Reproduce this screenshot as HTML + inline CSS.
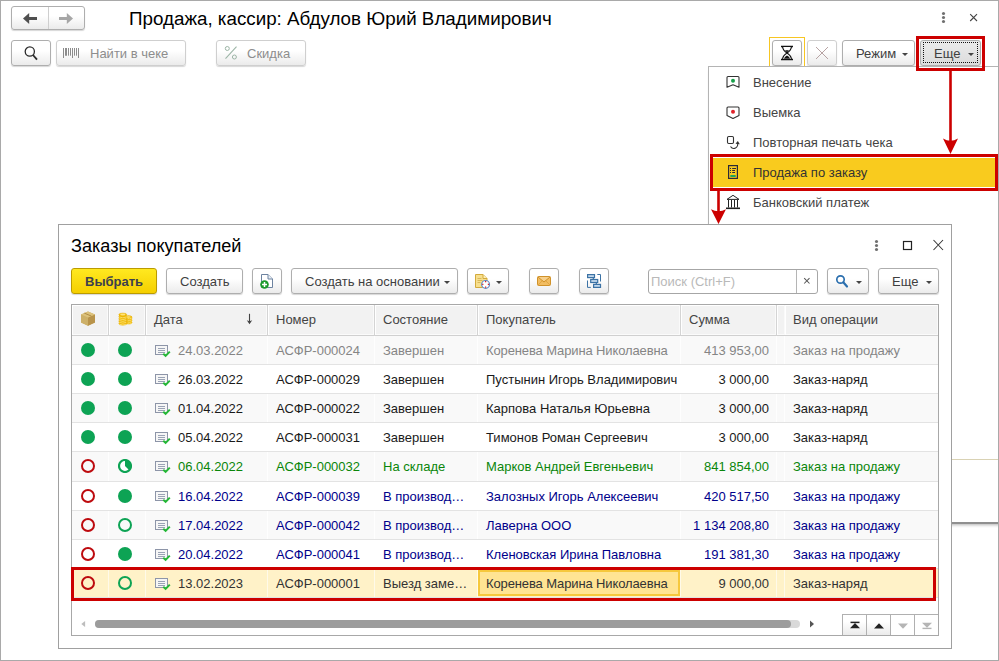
<!DOCTYPE html>
<html lang="ru">
<head>
<meta charset="utf-8">
<title>Продажа</title>
<style>
*{box-sizing:border-box;margin:0;padding:0}
html,body{width:999px;height:661px;overflow:hidden;background:#fff}
body{position:relative;font-family:"Liberation Sans",sans-serif;font-size:13px;color:#333}
.abs{position:absolute}
#frame{position:absolute;left:0;top:0;width:999px;height:661px;border:1px solid #a9a9a9;pointer-events:none;z-index:50}
.btn{position:absolute;height:26px;border:1px solid #aeaeae;border-radius:3px;background:linear-gradient(#ffffff 0%,#ffffff 40%,#ebebeb 100%);box-shadow:0 1px 1px rgba(0,0,0,.16);font-size:13px;line-height:26px;color:#3f3f3f;white-space:nowrap}
.btn.dis{color:#8d8d8d;border-color:#cfcfcf}
.btn span.t{position:absolute;top:0}
.caret{position:absolute;width:0;height:0;border-left:3px solid transparent;border-right:3px solid transparent;border-top:3px solid #444}
#title{left:129px;top:8px;font-size:18.800px;line-height:22px;color:#000;white-space:nowrap}
/* popup */
#popup{left:708px;top:66px;width:300px;height:458px;background:#fff;border:1px solid #b4b4b4;border-bottom:2px solid #8f8f8f;box-shadow:0 3px 3px -2px rgba(0,0,0,.3)}
.mi{position:absolute;left:44px;font-size:13px;line-height:16px;color:#444;white-space:nowrap}
/* dialog */
#dlg{left:58px;top:224px;width:894px;height:425px;background:#fff;border:1px solid #a0a0a0;}
#dtitle{left:71px;top:235px;font-size:18.130px;line-height:22px;color:#000;white-space:nowrap}
#tbl{left:71px;top:304px;width:868px;height:332px;border:1px solid #a8a8a8;background:#fff;overflow:hidden}
.hd{position:absolute;top:0;height:31px;background:#f2f2f2;border-right:1px solid #d4d4d4;border-bottom:1px solid #d0d0d0;box-shadow:inset 1px 0 0 #fff, inset -1px 0 0 #fafafa, inset 0 1px 0 #fff, inset 0 -1px 0 #fbfbfb;font-size:13px;line-height:29px;color:#444;white-space:nowrap;overflow:hidden}
.row{position:absolute;left:0;width:866px;height:29.125px;border-bottom:1px solid #e3e3e3;font-size:13px;white-space:nowrap}
.row.alt{background:#f9f9f9}
.row .c{position:absolute;top:0;height:100%;line-height:30px;overflow:hidden;border-right:1px solid rgba(255,255,255,.75)}
.gry{color:#858585}.blk{color:#1a1a1a}.grn{color:#0a860a}.nav{color:#00008b}
.sel{background:#fff2c8!important;color:#333}
.sel .c{border-right-color:rgba(255,255,255,.6)}
.dot{position:absolute;width:14px;height:14px;border-radius:50%}
.dot.f{background:#0da354}
.dot.ro{border:2px solid #bd0a0e}
.dot.go{border:2px solid #0da354}
.red{position:absolute;border:3px solid #cc0000}
</style>
</head>
<body>
<!-- main window header -->
<div class="btn abs" style="left:11px;top:6px;width:74px;height:24px;"></div>
<div class="abs" style="left:48px;top:7px;width:1px;height:22px;background:#cfcfcf"></div>
<svg class="abs" style="left:11px;top:6px" width="74" height="24" viewBox="0 0 74 24">
<path d="M12 12.500L18.200 7V18Z" fill="#4f4f4f"/><path d="M18 12.500h8" stroke="#4f4f4f" stroke-width="3"/>
<path d="M62 12.500L55.800 7V18Z" fill="#a6a6a6"/><path d="M48 12.500h8" stroke="#a6a6a6" stroke-width="3"/>
</svg>
<div id="title" class="abs">Продажа, кассир: Абдулов Юрий Владимирович</div>
<!-- dots & close -->
<svg class="abs" style="left:935px;top:8px" width="50" height="20" viewBox="0 0 50 20">
<circle cx="8.500" cy="5.500" r="1.550" fill="#707070"/><circle cx="8.500" cy="9.500" r="1.550" fill="#707070"/><circle cx="8.500" cy="13.500" r="1.550" fill="#707070"/>
<path d="M35.200 6.200l6.800 6.800M42 6.200l-6.800 6.800" stroke="#444" stroke-width="1.100"/>
</svg>

<!-- toolbar row -->
<div class="btn" style="left:11px;top:40px;width:40px"></div>
<svg class="abs" style="left:22px;top:44px" width="18" height="18" viewBox="0 0 18 18"><circle cx="7.800" cy="7.500" r="4.600" fill="none" stroke="#2b2b2b" stroke-width="1.300"/><path d="M11 11l4 4.700" stroke="#2b2b2b" stroke-width="1.800"/></svg>
<div class="btn dis" style="left:56px;top:40px;width:130px"><span class="t" style="left:33px">Найти в чеке</span></div>
<svg class="abs" style="left:62px;top:48px" width="18" height="12" viewBox="0 0 18 12"><path d="M1.500 0v10M6.500 0v7.700M8.500 0v7.700M10.500 0v10M12.500 0v7.700M14.500 0v7.700M16.500 0v10" stroke="#8c8c8c" stroke-width="1"/><path d="M4 0v7.700" stroke="#8c8c8c" stroke-width="2"/></svg>
<div class="btn dis" style="left:216px;top:40px;width:90px"><span class="t" style="left:30px">Скидка</span></div>
<svg class="abs" style="left:223px;top:45px" width="16" height="16" viewBox="0 0 16 16"><circle cx="4.300" cy="3.500" r="2" fill="none" stroke="#9cb5a6" stroke-width="1"/><circle cx="11.400" cy="12" r="2" fill="none" stroke="#9cb5a6" stroke-width="1"/><path d="M13.500 1.700L2.500 13.700" stroke="#9cb5a6" stroke-width="1.100"/></svg>

<div class="abs" style="left:769px;top:37px;width:36px;height:32px;border:1.500px solid #f7c623;background:#fff"></div>
<div class="btn" style="left:772px;top:40px;width:30px"></div>
<div class="btn dis" style="left:807px;top:40px;width:30px"></div>
<div class="btn" style="left:842px;top:40px;width:73px"><span class="t" style="left:13px">Режим</span><i class="caret" style="left:59px;top:12px"></i></div>
<div class="btn" style="left:920px;top:40px;width:61px;background:linear-gradient(#ebebeb,#dcdcdc)"><span class="t" style="left:13px">Еще</span><i class="caret" style="left:47px;top:12px"></i></div>
<div class="abs" style="left:923px;top:42px;width:55px;height:21px;border:1px dotted #111"></div>

<svg class="abs" style="left:780px;top:45px" width="14" height="16" viewBox="0 0 14 16">
 <path d="M1 1.500h12M1 14.500h12" stroke="#111" stroke-width="1.400"/>
 <path d="M2.600 2Q3 5.500 7 8Q11 5.500 11.400 2M2.600 14Q3 10.500 7 8Q11 10.500 11.400 14" fill="#fff" stroke="#111" stroke-width="1.200"/>
 <path d="M5 5.300h4L7 7.600Z" fill="#111"/><path d="M3.800 13.800Q5 11.500 7 10.600Q9 11.500 10.200 13.800Z" fill="#111"/>
</svg>
<svg class="abs" style="left:815px;top:46px" width="14" height="14" viewBox="0 0 14 14"><path d="M1 1l12 12M13 1L1 13" stroke="#b7a3a3" stroke-width="1"/></svg>
<!-- popup -->
<div id="popup" class="abs">
 <div class="mi" style="top:8px">Внесение</div>
 <div class="mi" style="top:38px">Выемка</div>
 <div class="mi" style="top:68px">Повторная печать чека</div>
 <div class="abs" style="left:1px;top:91px;width:290px;height:29px;background:#f9cb1e"></div>
<svg class="abs" style="left:15px;top:7px" width="18" height="140" viewBox="0 0 18 140">
 <!-- vnesenie -->
 <path d="M3 3.500Q3 2.500 4 2.500H14Q15 2.500 15 3.500V13.300L9 10.800L3 13.300Z" fill="#fff" stroke="#333" stroke-width="1.100" stroke-linejoin="round"/>
 <circle cx="9" cy="6.800" r="2" fill="#17a04a"/>
 <!-- vyemka -->
 <path d="M3 34Q3 33 4 33H14Q15 33 15 34V41.500L9 44.500L3 41.500Z" fill="#fff" stroke="#333" stroke-width="1.100" stroke-linejoin="round"/>
 <circle cx="9" cy="37.800" r="2" fill="#e0222a"/>
 <!-- reprint -->
 <rect x="3.500" y="62.500" width="6" height="7" rx="1.200" fill="#fff" stroke="#333" stroke-width="1.100"/>
 <path d="M6.500 72.500Q8.500 75.500 11.500 74Q14.500 72 13.500 69" fill="none" stroke="#333" stroke-width="1.100"/>
 <path d="M11.500 69.800L13.800 67L15.800 70.300Z" fill="#333"/>
 <!-- sale by order -->
 <rect x="4.600" y="91.600" width="8.800" height="12.800" fill="none" stroke="#2b2b38" stroke-width="1.200"/>
 <path d="M6 94.500h1M8.200 94.500h3.800M6 96.500h1M8.200 96.500h2.800M6 98.500h1M8.200 98.500h2.800" stroke="#2b2b38" stroke-width="1"/>
 <path d="M6.300 102h5.400" stroke="#1fa55a" stroke-width="2"/>
 <!-- bank -->
 <path d="M9 121.300L15 125.400H3Z" fill="#fff" stroke="#222" stroke-width="1" stroke-linejoin="miter"/>
 <path d="M4.500 126v7.500M7.500 126v7.500M10.500 126v7.500M13.500 126v7.500" stroke="#222" stroke-width="1"/>
 <path d="M2 134.300h14" stroke="#222" stroke-width="1.600"/>
</svg>
 <div class="mi" style="top:98px;color:#333">Продажа по заказу</div>
 <div class="mi" style="top:128px">Банковский платеж</div>
 <div class="abs" style="left:243px;top:392px;width:56px;height:1px;background:#d9d2b4"></div>
</div>

<!-- dialog -->
<div id="dlg" class="abs"></div>
<div id="dtitle" class="abs">Заказы покупателей</div>


<!-- dialog toolbar -->
<div class="btn" style="left:71px;top:268px;width:86px;background:linear-gradient(#ffe920,#f5cf00);border-color:#bb9b00;color:#3c3f4e;font-weight:bold"><span class="t" style="left:13px">Выбрать</span></div>
<div class="btn" style="left:166px;top:268px;width:77px"><span class="t" style="left:13px">Создать</span></div>
<div class="btn" style="left:252px;top:268px;width:30px"></div>
<svg class="abs" style="left:258px;top:272px" width="18" height="18" viewBox="0 0 18 18">
 <path d="M3.500 2.500H10L14.500 7V15.500H3.500Z" fill="#fff" stroke="#6d83a0" stroke-width="1"/>
 <path d="M10 2.500V7H14.500" fill="#e8eef6" stroke="#6d83a0" stroke-width="1"/>
 <circle cx="6.500" cy="12.500" r="4.300" fill="#1c9a2c"/>
 <path d="M6.500 10v5M4 12.500h5" stroke="#fff" stroke-width="1.500"/>
</svg>
<div class="btn" style="left:291px;top:268px;width:167px"><span class="t" style="left:13px">Создать на основании</span><i class="caret" style="left:152px;top:12px"></i></div>
<div class="btn" style="left:467px;top:268px;width:42px"><i class="caret" style="left:28px;top:12px"></i></div>
<svg class="abs" style="left:473px;top:272px" width="20" height="18" viewBox="0 0 20 18">
 <path d="M2.500 2.500H10L14 6.500V15.500H2.500Z" fill="#f7df8e" stroke="#d3aa3c" stroke-width="1"/>
 <path d="M10 2.500V6.500H14" fill="#fdf0bd" stroke="#d3aa3c" stroke-width="1"/>
 <path d="M4.500 6.500h4M4.500 8.500h5M4.500 10.500h3" stroke="#d9b85a" stroke-width="1"/>
 <circle cx="12.600" cy="12.400" r="3.900" fill="#fff" stroke="#5a86c5" stroke-width="1.200"/>
 <path d="M12.600 9v1.200M12.600 14.600v1.200M9.200 12.400h1.200M14.800 12.400h1.200" stroke="#e02020" stroke-width="1.200"/>
</svg>
<div class="btn" style="left:529px;top:268px;width:30px"></div>
<svg class="abs" style="left:536px;top:275px" width="16" height="12" viewBox="0 0 16 12">
 <rect x="1.500" y="1.500" width="13" height="9" rx="1" fill="#f2bd62" stroke="#d0922a" stroke-width="1"/>
 <path d="M2 2L8 7L14 2" fill="#f7d08c" stroke="#cc8a1c" stroke-width=".9"/>
 <path d="M2 10L6.300 5.800M14 10L9.700 5.800" stroke="#dc9f3a" stroke-width=".8" fill="none"/>
</svg>
<div class="btn" style="left:579px;top:268px;width:30px"></div>
<svg class="abs" style="left:586px;top:273px" width="16" height="16" viewBox="0 0 16 16">
 <path d="M11.300 1.500H14.500V8.500M1.500 7.500V14.400H4.800" fill="none" stroke="#3b72a5" stroke-width="1"/>
 <path d="M7.300 4.500V6.500M10.300 9.500V11.500" stroke="#3b72a5" stroke-width="1.200"/>
 <rect x="1.600" y="1.600" width="6.900" height="3" fill="#c3d8ec" stroke="#3b72a5" stroke-width="1.200"/>
 <rect x="4.700" y="6.500" width="7" height="3" fill="#c3d8ec" stroke="#3b72a5" stroke-width="1.200"/>
 <rect x="7.600" y="11.400" width="6.900" height="3" fill="#c3d8ec" stroke="#3b72a5" stroke-width="1.200"/>
</svg>
<div class="abs" style="left:648px;top:269px;width:170px;height:25px;border:1px solid #a6a6a6;border-radius:3px;background:#fff"></div>
<div class="abs" style="left:796px;top:270px;width:1px;height:23px;background:#b5b5b5"></div>
<div class="abs" style="left:651px;top:269px;font-size:13px;line-height:26px;color:#b9b9b9;white-space:nowrap">Поиск (Ctrl+F)</div>
<svg class="abs" style="left:802px;top:276px" width="10" height="10" viewBox="0 0 10 10"><path d="M2.200 2.200l5.300 5.300M7.500 2.200l-5.300 5.300" stroke="#555" stroke-width="1.050"/></svg>
<div class="btn" style="left:827px;top:268px;width:42px"><i class="caret" style="left:28px;top:12px"></i></div>
<svg class="abs" style="left:834px;top:273px" width="16" height="16" viewBox="0 0 16 16"><circle cx="6.500" cy="6.500" r="3.700" fill="none" stroke="#2b6fae" stroke-width="1.700"/><path d="M9.300 9.300l3.700 4.200" stroke="#2b6fae" stroke-width="2.200" stroke-linecap="round"/></svg>
<div class="btn" style="left:878px;top:268px;width:61px"><span class="t" style="left:13px">Еще</span><i class="caret" style="left:47px;top:12px"></i></div>
<!-- dialog window controls -->
<svg class="abs" style="left:870px;top:236px" width="80" height="18" viewBox="0 0 80 18">
 <circle cx="6.500" cy="5.500" r="1.550" fill="#707070"/><circle cx="6.500" cy="9.500" r="1.550" fill="#707070"/><circle cx="6.500" cy="13.500" r="1.550" fill="#707070"/>
 <rect x="33.500" y="5.500" width="8" height="8" fill="none" stroke="#222" stroke-width="1.200"/>
 <path d="M63.500 4l9.500 10M73 4l-9.500 10" stroke="#333" stroke-width="1.050"/>
</svg>
<div id="tbl" class="abs">
<!--TBL-->
<div class="hd" style="left:0px;width:37px;padding-left:8px"></div>
<div class="hd" style="left:37px;width:37px;padding-left:8px"></div>
<div class="hd" style="left:74px;width:122px;padding-left:8px">Дата<svg style="position:absolute;left:99px;top:8px" width="9" height="12" viewBox="0 0 9 12"><path d="M4.500 0.800V9" stroke="#444" stroke-width="1.100"/><path d="M1.800 7.300L4.500 8.300L7.200 7.300L4.500 11.200Z" fill="#444"/></svg></div>
<div class="hd" style="left:196px;width:107px;padding-left:8px">Номер</div>
<div class="hd" style="left:303px;width:103px;padding-left:8px">Состояние</div>
<div class="hd" style="left:406px;width:203px;padding-left:8px">Покупатель</div>
<div class="hd" style="left:609px;width:96px;padding-left:8px">Сумма</div>
<div class="hd" style="left:705px;width:8px;padding-left:8px"></div>
<div class="hd" style="left:713px;width:154px;padding-left:8px">Вид операции</div>
<svg class="abs" style="left:7px;top:5px" width="18" height="17" viewBox="0 0 18 17"><path d="M2 4.500L9 1.500L16 4.500V12.500L9 15.800L2 12.500Z" fill="#c9a95c"/>
 <path d="M2 4.500L9 7.600V15.800L2 12.500Z" fill="#cdb068"/>
 <path d="M9 7.600L16 4.500V12.500L9 15.800Z" fill="#b8934a"/>
 <path d="M2 4.500L9 1.500L16 4.500L9 7.600Z" fill="#dcc27c"/>
 <path d="M5.300 3.100L12.400 6.100" stroke="#b08c44" stroke-width="1"/></svg>
<svg class="abs" style="left:44px;top:6px" width="18" height="17" viewBox="0 0 18 17"><g fill="#f2bd0a" stroke="#dfa300" stroke-width=".4">
 <ellipse cx="12.500" cy="11.500" rx="3.600" ry="1.600"/><ellipse cx="12.500" cy="9.700" rx="3.600" ry="1.600"/><ellipse cx="12.500" cy="7.900" rx="3.600" ry="1.600"/><ellipse cx="12.500" cy="6.200" rx="3.600" ry="1.600"/>
 <ellipse cx="6.800" cy="12.600" rx="4" ry="1.700"/><ellipse cx="6.800" cy="10.800" rx="4" ry="1.700"/><ellipse cx="6.800" cy="9" rx="4" ry="1.700"/><ellipse cx="6.800" cy="7.200" rx="4" ry="1.700"/><ellipse cx="6.800" cy="5.400" rx="4" ry="1.700"/><ellipse cx="6.800" cy="3.700" rx="4" ry="1.700"/>
 </g>
 <g fill="none" stroke="#ffe98a" stroke-width=".7">
 <path d="M3.300 6q3.500 1.600 7 0M3.300 7.800q3.500 1.600 7 0M3.300 9.600q3.500 1.600 7 0M3.300 11.400q3.500 1.600 7 0M3.300 13.200q3.500 1.600 7 0M11.500 7.400q2.300 .9 4.300 -.3M11.500 9.200q2.300 .9 4.300 -.3M11.500 11q2.300 .9 4.300 -.3M11.500 12.700q2.300 .9 4.300 -.3"/>
 </g>
 <ellipse cx="6.800" cy="3.500" rx="2.600" ry=".9" fill="#ffe27a"/>
 <ellipse cx="12.500" cy="6" rx="2.300" ry=".8" fill="#ffe27a"/></svg>
<div class="row gry alt" style="top:31px;height:29px"><div class="c" style="left:0px;width:37px;"><i class="dot f" style="left:9px;top:7px"></i></div><div class="c" style="left:37px;width:37px;"><i class="dot f" style="left:9px;top:7px"></i></div><div class="c" style="left:74px;width:122px;"><svg class="abs" style="left:9px;top:8px" width="16" height="15" viewBox="0 0 16 15"><rect x=".5" y="1.500" width="12" height="9" fill="#f6f6f6" stroke="#8d95a8" stroke-width="1"/>
 <path d="M3 4.500h7M3 6.500h7M3 8.500h7" stroke="#9aa3b5" stroke-width="1"/>
 <path d="M8.300 9.800l2.300 2.100L14.800 7.600" stroke="#24b836" stroke-width="2" fill="none"/></svg><span style="position:absolute;left:32px">24.03.2022</span></div><div class="c" style="left:196px;width:107px;padding-left:8px;">АСФР-000024</div><div class="c" style="left:303px;width:103px;padding-left:8px;">Завершен</div><div class="c" style="left:406px;width:203px;padding-left:8px;letter-spacing:-.120px;">Коренева Марина Николаевна</div><div class="c" style="left:609px;width:96px;padding-right:7px;text-align:right;">413 953,00</div><div class="c" style="left:705px;width:8px;"></div><div class="c" style="left:713px;width:154px;padding-left:8px;">Заказ на продажу</div></div>
<div class="row blk" style="top:60px;height:29px"><div class="c" style="left:0px;width:37px;"><i class="dot f" style="left:9px;top:7px"></i></div><div class="c" style="left:37px;width:37px;"><i class="dot f" style="left:9px;top:7px"></i></div><div class="c" style="left:74px;width:122px;"><svg class="abs" style="left:9px;top:8px" width="16" height="15" viewBox="0 0 16 15"><rect x=".5" y="1.500" width="12" height="9" fill="#f6f6f6" stroke="#8d95a8" stroke-width="1"/>
 <path d="M3 4.500h7M3 6.500h7M3 8.500h7" stroke="#9aa3b5" stroke-width="1"/>
 <path d="M8.300 9.800l2.300 2.100L14.800 7.600" stroke="#24b836" stroke-width="2" fill="none"/></svg><span style="position:absolute;left:32px">26.03.2022</span></div><div class="c" style="left:196px;width:107px;padding-left:8px;">АСФР-000029</div><div class="c" style="left:303px;width:103px;padding-left:8px;">Завершен</div><div class="c" style="left:406px;width:203px;padding-left:8px;">Пустынин Игорь Владимирович</div><div class="c" style="left:609px;width:96px;padding-right:7px;text-align:right;">3 000,00</div><div class="c" style="left:705px;width:8px;"></div><div class="c" style="left:713px;width:154px;padding-left:8px;">Заказ-наряд</div></div>
<div class="row blk alt" style="top:89px;height:29px"><div class="c" style="left:0px;width:37px;"><i class="dot f" style="left:9px;top:7px"></i></div><div class="c" style="left:37px;width:37px;"><i class="dot f" style="left:9px;top:7px"></i></div><div class="c" style="left:74px;width:122px;"><svg class="abs" style="left:9px;top:8px" width="16" height="15" viewBox="0 0 16 15"><rect x=".5" y="1.500" width="12" height="9" fill="#f6f6f6" stroke="#8d95a8" stroke-width="1"/>
 <path d="M3 4.500h7M3 6.500h7M3 8.500h7" stroke="#9aa3b5" stroke-width="1"/>
 <path d="M8.300 9.800l2.300 2.100L14.800 7.600" stroke="#24b836" stroke-width="2" fill="none"/></svg><span style="position:absolute;left:32px">01.04.2022</span></div><div class="c" style="left:196px;width:107px;padding-left:8px;">АСФР-000022</div><div class="c" style="left:303px;width:103px;padding-left:8px;">Завершен</div><div class="c" style="left:406px;width:203px;padding-left:8px;">Карпова Наталья Юрьевна</div><div class="c" style="left:609px;width:96px;padding-right:7px;text-align:right;">3 000,00</div><div class="c" style="left:705px;width:8px;"></div><div class="c" style="left:713px;width:154px;padding-left:8px;">Заказ-наряд</div></div>
<div class="row blk" style="top:118px;height:29px"><div class="c" style="left:0px;width:37px;"><i class="dot f" style="left:9px;top:7px"></i></div><div class="c" style="left:37px;width:37px;"><i class="dot f" style="left:9px;top:7px"></i></div><div class="c" style="left:74px;width:122px;"><svg class="abs" style="left:9px;top:8px" width="16" height="15" viewBox="0 0 16 15"><rect x=".5" y="1.500" width="12" height="9" fill="#f6f6f6" stroke="#8d95a8" stroke-width="1"/>
 <path d="M3 4.500h7M3 6.500h7M3 8.500h7" stroke="#9aa3b5" stroke-width="1"/>
 <path d="M8.300 9.800l2.300 2.100L14.800 7.600" stroke="#24b836" stroke-width="2" fill="none"/></svg><span style="position:absolute;left:32px">05.04.2022</span></div><div class="c" style="left:196px;width:107px;padding-left:8px;">АСФР-000031</div><div class="c" style="left:303px;width:103px;padding-left:8px;">Завершен</div><div class="c" style="left:406px;width:203px;padding-left:8px;">Тимонов Роман Сергеевич</div><div class="c" style="left:609px;width:96px;padding-right:7px;text-align:right;">3 000,00</div><div class="c" style="left:705px;width:8px;"></div><div class="c" style="left:713px;width:154px;padding-left:8px;">Заказ-наряд</div></div>
<div class="row grn alt" style="top:147px;height:30px"><div class="c" style="left:0px;width:37px;"><i class="dot ro" style="left:9px;top:7px"></i></div><div class="c" style="left:37px;width:37px;"><svg class="abs" style="left:9px;top:7px" width="14" height="14" viewBox="0 0 14 14"><circle cx="7" cy="7" r="6" fill="#fff" stroke="#0da354" stroke-width="2.200"/><path d="M7 7V1A6 6 0 0 1 11.240 11.240Z" fill="#0da354"/></svg></div><div class="c" style="left:74px;width:122px;"><svg class="abs" style="left:9px;top:8px" width="16" height="15" viewBox="0 0 16 15"><rect x=".5" y="1.500" width="12" height="9" fill="#f6f6f6" stroke="#8d95a8" stroke-width="1"/>
 <path d="M3 4.500h7M3 6.500h7M3 8.500h7" stroke="#9aa3b5" stroke-width="1"/>
 <path d="M8.300 9.800l2.300 2.100L14.800 7.600" stroke="#24b836" stroke-width="2" fill="none"/></svg><span style="position:absolute;left:32px">06.04.2022</span></div><div class="c" style="left:196px;width:107px;padding-left:8px;">АСФР-000032</div><div class="c" style="left:303px;width:103px;padding-left:8px;">На складе</div><div class="c" style="left:406px;width:203px;padding-left:8px;">Марков Андрей Евгеньевич</div><div class="c" style="left:609px;width:96px;padding-right:7px;text-align:right;">841 854,00</div><div class="c" style="left:705px;width:8px;"></div><div class="c" style="left:713px;width:154px;padding-left:8px;">Заказ на продажу</div></div>
<div class="row nav" style="top:177px;height:29px"><div class="c" style="left:0px;width:37px;"><i class="dot ro" style="left:9px;top:7px"></i></div><div class="c" style="left:37px;width:37px;"><i class="dot f" style="left:9px;top:7px"></i></div><div class="c" style="left:74px;width:122px;"><svg class="abs" style="left:9px;top:8px" width="16" height="15" viewBox="0 0 16 15"><rect x=".5" y="1.500" width="12" height="9" fill="#f6f6f6" stroke="#8d95a8" stroke-width="1"/>
 <path d="M3 4.500h7M3 6.500h7M3 8.500h7" stroke="#9aa3b5" stroke-width="1"/>
 <path d="M8.300 9.800l2.300 2.100L14.800 7.600" stroke="#24b836" stroke-width="2" fill="none"/></svg><span style="position:absolute;left:32px">16.04.2022</span></div><div class="c" style="left:196px;width:107px;padding-left:8px;">АСФР-000039</div><div class="c" style="left:303px;width:103px;padding-left:8px;">В производ…</div><div class="c" style="left:406px;width:203px;padding-left:8px;">Залозных Игорь Алексеевич</div><div class="c" style="left:609px;width:96px;padding-right:7px;text-align:right;">420 517,50</div><div class="c" style="left:705px;width:8px;"></div><div class="c" style="left:713px;width:154px;padding-left:8px;">Заказ на продажу</div></div>
<div class="row nav alt" style="top:206px;height:29px"><div class="c" style="left:0px;width:37px;"><i class="dot ro" style="left:9px;top:7px"></i></div><div class="c" style="left:37px;width:37px;"><i class="dot go" style="left:9px;top:7px"></i></div><div class="c" style="left:74px;width:122px;"><svg class="abs" style="left:9px;top:8px" width="16" height="15" viewBox="0 0 16 15"><rect x=".5" y="1.500" width="12" height="9" fill="#f6f6f6" stroke="#8d95a8" stroke-width="1"/>
 <path d="M3 4.500h7M3 6.500h7M3 8.500h7" stroke="#9aa3b5" stroke-width="1"/>
 <path d="M8.300 9.800l2.300 2.100L14.800 7.600" stroke="#24b836" stroke-width="2" fill="none"/></svg><span style="position:absolute;left:32px">17.04.2022</span></div><div class="c" style="left:196px;width:107px;padding-left:8px;">АСФР-000042</div><div class="c" style="left:303px;width:103px;padding-left:8px;">В производ…</div><div class="c" style="left:406px;width:203px;padding-left:8px;">Лаверна ООО</div><div class="c" style="left:609px;width:96px;padding-right:7px;text-align:right;">1 134 208,80</div><div class="c" style="left:705px;width:8px;"></div><div class="c" style="left:713px;width:154px;padding-left:8px;">Заказ на продажу</div></div>
<div class="row nav" style="top:235px;height:29px"><div class="c" style="left:0px;width:37px;"><i class="dot ro" style="left:9px;top:7px"></i></div><div class="c" style="left:37px;width:37px;"><i class="dot f" style="left:9px;top:7px"></i></div><div class="c" style="left:74px;width:122px;"><svg class="abs" style="left:9px;top:8px" width="16" height="15" viewBox="0 0 16 15"><rect x=".5" y="1.500" width="12" height="9" fill="#f6f6f6" stroke="#8d95a8" stroke-width="1"/>
 <path d="M3 4.500h7M3 6.500h7M3 8.500h7" stroke="#9aa3b5" stroke-width="1"/>
 <path d="M8.300 9.800l2.300 2.100L14.800 7.600" stroke="#24b836" stroke-width="2" fill="none"/></svg><span style="position:absolute;left:32px">20.04.2022</span></div><div class="c" style="left:196px;width:107px;padding-left:8px;">АСФР-000041</div><div class="c" style="left:303px;width:103px;padding-left:8px;">В производ…</div><div class="c" style="left:406px;width:203px;padding-left:8px;">Кленовская Ирина Павловна</div><div class="c" style="left:609px;width:96px;padding-right:7px;text-align:right;">191 381,30</div><div class="c" style="left:705px;width:8px;"></div><div class="c" style="left:713px;width:154px;padding-left:8px;">Заказ на продажу</div></div>
<div class="row sel alt" style="top:264px;height:29px"><div class="c" style="left:0px;width:37px;"><i class="dot ro" style="left:9px;top:7px"></i></div><div class="c" style="left:37px;width:37px;"><i class="dot go" style="left:9px;top:7px"></i></div><div class="c" style="left:74px;width:122px;"><svg class="abs" style="left:9px;top:8px" width="16" height="15" viewBox="0 0 16 15"><rect x=".5" y="1.500" width="12" height="9" fill="#f6f6f6" stroke="#8d95a8" stroke-width="1"/>
 <path d="M3 4.500h7M3 6.500h7M3 8.500h7" stroke="#9aa3b5" stroke-width="1"/>
 <path d="M8.300 9.800l2.300 2.100L14.800 7.600" stroke="#24b836" stroke-width="2" fill="none"/></svg><span style="position:absolute;left:32px">13.02.2023</span></div><div class="c" style="left:196px;width:107px;padding-left:8px;">АСФР-000001</div><div class="c" style="left:303px;width:103px;padding-left:8px;">Выезд заме…</div><div class="c" style="left:406px;width:203px;padding-left:8px;letter-spacing:-.120px;"><i style="position:absolute;left:0;top:1px;width:202px;height:26px;border:2px solid #f6c83c;background:#ffe493"></i><span style="position:relative">Коренева Марина Николаевна</span></div><div class="c" style="left:609px;width:96px;padding-right:7px;text-align:right;">9 000,00</div><div class="c" style="left:705px;width:8px;"></div><div class="c" style="left:713px;width:154px;padding-left:8px;">Заказ-наряд</div></div>
<!--/TBL-->
<!--TBLEXTRA-->
<svg class="abs" style="left:8px;top:313px" width="740" height="12" viewBox="0 0 740 12">
 <rect x="15" y="2" width="705" height="8" rx="4" fill="#d9d9d9"/>
 <rect x="15" y="2" width="696" height="8" rx="4" fill="#9c9c9c"/>
 <path d="M5.100 3.100v5.800L1.300 6Z" fill="#bdbdbd"/>
</svg>
<svg class="abs" style="left:735px;top:313px" width="12" height="12" viewBox="0 0 12 12"><path d="M3 2.500v7L7 6Z" fill="#555"/></svg>
<div class="abs" style="left:770px;top:309px;width:97px;height:22px;border:1px solid #b0b0b0;border-right:0;border-bottom:0;background:#fff"></div>
<div class="abs" style="left:771px;top:310px;width:48px;height:21px;background:linear-gradient(#fff 30%,#e9e9e9)"></div>
<div class="abs" style="left:794px;top:310px;width:1px;height:21px;background:#b0b0b0"></div>
<div class="abs" style="left:818px;top:310px;width:1px;height:21px;background:#b0b0b0"></div>
<div class="abs" style="left:842px;top:310px;width:1px;height:21px;background:#b0b0b0"></div>
<svg class="abs" style="left:771px;top:310px" width="96" height="21" viewBox="0 0 96 21">
 <path d="M7.500 7.400h9" stroke="#222" stroke-width="1.500"/><path d="M7 13.200h10L12 8.100Z" fill="#222"/>
 <path d="M31 13.500h10L36 8.300Z" fill="#222"/>
 <path d="M55 8.500h10L60 13.700Z" fill="#b5b5b5"/>
 <path d="M79 7.800h10L84 12.800Z" fill="#b5b5b5"/><path d="M79.500 13.400h9" stroke="#b5b5b5" stroke-width="1.400"/>
</svg>
</div>

<!-- annotations -->
<div class="red" style="left:916px;top:36px;width:69px;height:35px"></div>
<div class="red" style="left:710px;top:154px;width:288px;height:37px"></div>
<div class="red" style="left:71px;top:567px;width:865px;height:34px"></div>
<svg class="abs" style="left:940px;top:70px" width="22" height="86" viewBox="0 0 22 86">
 <path d="M10.500 0V74" stroke="#cc0000" stroke-width="2.600"/>
 <path d="M10.500 84L3 68.500Q10.500 73 18 68.500Z" fill="#cc0000"/>
</svg>
<svg class="abs" style="left:708px;top:190px" width="22" height="36" viewBox="0 0 22 36">
 <path d="M10.500 0V24" stroke="#cc0000" stroke-width="2.600"/>
 <path d="M10.500 34L3 19.200Q10.500 23.500 18 19.200Z" fill="#cc0000"/>
</svg>
<div id="frame"></div>
</body>
</html>
